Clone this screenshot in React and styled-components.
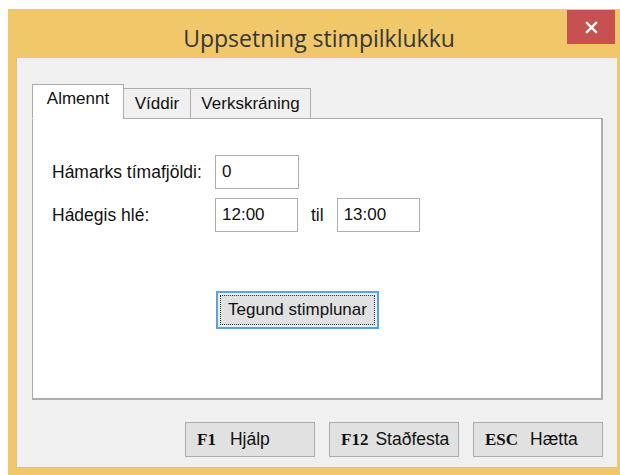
import React from "react"
import styled, { createGlobalStyle } from "styled-components"

const GlobalStyle = createGlobalStyle`
  html, body {
    margin: 0;
    padding: 0;
    background: #ffffff;
  }
  body {
    font-family: "Liberation Sans", Arial, sans-serif;
    overflow: hidden;
  }
`

const Window = styled.div`
  display: flex;
  flex-direction: column;
  margin: 9px 0 0 8px;
  width: 612px;
  height: 466px;
  background: #f0c869;
  box-sizing: border-box;
  padding: 0 0 7px 8px;
`

const TitleBar = styled.div`
  position: relative;
  height: 50px;
  display: flex;
  align-items: center;
  justify-content: center;
`

const Title = styled.div`
  font-family: "Open Sans", "Noto Sans", sans-serif;
  font-size: 23px;
  color: #363636;
  margin-left: 2px;
  margin-top: 9px;
`

const CloseButton = styled.div`
  position: absolute;
  top: 1px;
  right: 5px;
  width: 48px;
  height: 34px;
  background: #c75050;
  color: #ffffff;
  display: flex;
  align-items: center;
  justify-content: center;
`

const Client = styled.div`
  flex: 1;
  margin-right: 3px;
  background: #f0f0f0;
  border-left: 1px solid #d6c296;
  border-bottom: 1px solid #d6c296;
  display: flex;
  flex-direction: column;
  padding: 26px 14px 10px 15px;
  box-sizing: border-box;
`

const TabStrip = styled.div`
  display: flex;
  align-items: flex-end;
  height: 35px;
  position: relative;
  z-index: 1;
  margin-bottom: -1px;
`

const Tab = styled.div`
  box-sizing: border-box;
  width: ${(p) => p.$w}px;
  height: ${(p) => (p.$active ? "35px" : "31px")};
  margin-left: ${(p) => (p.$active ? "0" : "-1px")};
  border: 1px solid #adadad;
  border-bottom: ${(p) => (p.$active ? "1px solid #ffffff" : "1px solid #adadad")};
  background: ${(p) => (p.$active ? "#ffffff" : "#f0f0f0")};
  display: flex;
  align-items: center;
  justify-content: center;
  font-size: 17px;
  color: #111111;
  padding-bottom: ${(p) => (p.$active ? "5px" : "0")};
`

const Panel = styled.div`
  height: 282px;
  box-sizing: border-box;
  background: #ffffff;
  border: 1px solid #adadad;
  border-right-width: 2px;
  border-bottom-width: 2px;
  padding: 36px 0 0 19px;
  display: flex;
  flex-direction: column;
`

const FieldRow = styled.div`
  display: flex;
  align-items: center;
  height: 34px;
  margin-bottom: 9px;
  font-size: 17.5px;
  color: #111111;
`

const Label = styled.div`
  width: 163px;
  white-space: nowrap;
`

const Input = styled.div`
  box-sizing: border-box;
  width: ${(p) => p.$width || 84}px;
  height: 34px;
  border: 1px solid #adadad;
  background: #ffffff;
  display: flex;
  align-items: center;
  padding-left: 6px;
  font-size: 17px;
`

const Til = styled.div`
  margin: 0 13px 0 13px;
`

const ActionButton = styled.div`
  box-sizing: border-box;
  margin: 50px 0 0 164px;
  width: 163px;
  height: 38px;
  border: 2px solid #5aa2e8;
  background: #e5f1fb;
  padding: 2px;
  display: flex;
`

const FocusRect = styled.div`
  flex: 1;
  border: 1px dotted #333333;
  background: #e1e1e1;
  display: flex;
  align-items: center;
  justify-content: center;
  font-size: 17px;
  color: #111111;
`

const ButtonRow = styled.div`
  display: flex;
  justify-content: flex-end;
  gap: 14px;
  margin-top: 22px;
`

const KeyButton = styled.div`
  box-sizing: border-box;
  width: 130px;
  height: 35px;
  border: 1px solid #adadad;
  background: #e1e1e1;
  display: flex;
  align-items: center;
  padding-left: 11px;
  font-size: 17.5px;
  color: #111111;
`

const Key = styled.span`
  font-family: "Liberation Serif", "DejaVu Serif", serif;
  font-weight: bold;
  font-size: 17px;
  margin-right: ${(p) => p.$gap}px;
`

export default function App() {
  return (
    <>
      <GlobalStyle />
      <Window>
        <TitleBar>
          <Title>Uppsetning stimpilklukku</Title>
          <CloseButton>
            <svg width="13" height="13" viewBox="0 0 13 13">
              <path d="M2 2 L11 11 M11 2 L2 11" stroke="#ffffff" strokeWidth="2.4" strokeLinecap="square" />
            </svg>
          </CloseButton>
        </TitleBar>
        <Client>
          <TabStrip>
            <Tab $active $w={92}>Almennt</Tab>
            <Tab $w={68}>Víddir</Tab>
            <Tab $w={121}>Verkskráning</Tab>
          </TabStrip>
          <Panel>
            <FieldRow>
              <Label>Hámarks tímafjöldi:</Label>
              <Input>0</Input>
            </FieldRow>
            <FieldRow>
              <Label>Hádegis hlé:</Label>
              <Input $width={83}>12:00</Input>
              <Til>til</Til>
              <Input $width={83}>13:00</Input>
            </FieldRow>
            <ActionButton>
              <FocusRect>Tegund stimplunar</FocusRect>
            </ActionButton>
          </Panel>
          <ButtonRow>
            <KeyButton>
              <Key $gap={14}>F1</Key>Hjálp
            </KeyButton>
            <KeyButton>
              <Key $gap={7}>F12</Key>Staðfesta
            </KeyButton>
            <KeyButton>
              <Key $gap={12}>ESC</Key>Hætta
            </KeyButton>
          </ButtonRow>
        </Client>
      </Window>
    </>
  )
}
